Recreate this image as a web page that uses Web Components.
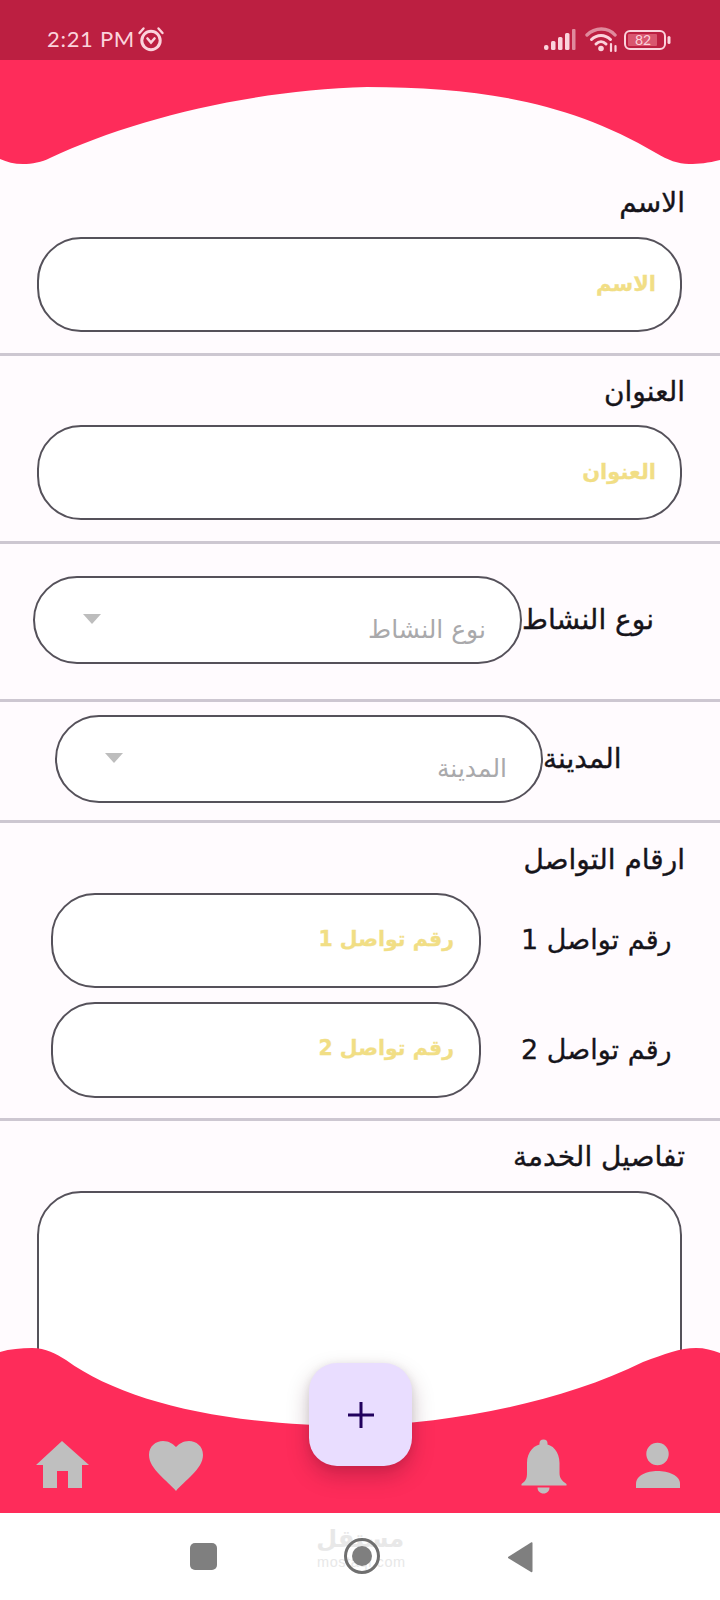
<!DOCTYPE html>
<html lang="ar">
<head>
<meta charset="utf-8">
<title>Form</title>
<style>
html,body{margin:0;padding:0;background:#fffbfe}
body{width:720px;height:1600px;overflow:hidden;font-family:"DejaVu Sans",sans-serif}
app-page{width:720px;height:1600px}
</style>
</head>
<body>
<app-page>
  <status-bar></status-bar>
  <header-curve></header-curve>
  <form-area>
    <form-section pt="24" pb="21">
      <form-label>الاسم</form-label>
      <text-field gap="19" hint="الاسم" h="95"></text-field>
    </form-section>
    <form-section pt="21" pb="21">
      <form-label>العنوان</form-label>
      <text-field gap="18" hint="العنوان" h="95"></text-field>
    </form-section>
    <form-section pt="32" pb="35">
      <select-row left="33" w="489" h="88" label="نوع النشاط" hint="نوع النشاط"></select-row>
    </form-section>
    <form-section pt="13" pb="17">
      <select-row left="55" w="488" h="88" label="المدينة" hint="المدينة"></select-row>
    </form-section>
    <form-section pt="22" pb="20">
      <form-label>ارقام التواصل</form-label>
      <contact-row gap="18" label="رقم تواصل 1" hint="رقم تواصل 1" h="95"></contact-row>
      <contact-row gap="14" label="رقم تواصل 2" hint="رقم تواصل 2" h="96"></contact-row>
    </form-section>
    <form-section pt="21" pb="0" noline>
      <form-label>تفاصيل الخدمة</form-label>
      <text-field gap="19" h="300" tall></text-field>
    </form-section>
  </form-area>
  <bottom-bar></bottom-bar>
  <nav-bar></nav-bar>
</app-page>
<script>
function el(name, css, html){
  customElements.define(name, class extends HTMLElement{
    constructor(){super();this.attachShadow({mode:"open"});}
    connectedCallback(){
      const a=k=>this.getAttribute(k);
      this.shadowRoot.innerHTML="<style>"+(typeof css==="function"?css(a,this):css)+"</style>"+(typeof html==="function"?html(a,this):html);
    }
  });
}
el("app-page",`:host{display:flex;flex-direction:column;position:relative}`,`<slot></slot>`);
el("form-area",`:host{display:block;flex:1;min-height:0;overflow:hidden}`,`<slot></slot>`);

el("status-bar",`:host{display:flex;align-items:center;height:60px;background:#bc1f41;color:#fbd3dc;box-sizing:border-box;padding:20px 49px 0 47px;flex:none}
.t{font:400 22px/1 "Lato",sans-serif;letter-spacing:.7px;margin-top:-3px;width:90px;white-space:nowrap}
svg{display:block}
.sp{flex:1}`,
`<span class="t">2:21 PM</span>
<svg width="28" height="26" viewBox="0 0 28 26" style="margin:-3px 0 0 0" fill="none" stroke="#fbd3dc" stroke-linecap="round">
<circle cx="14" cy="14.5" r="9.2" stroke-width="3"/>
<path d="M2.5 7 6.5 2.5M25.5 7 21.5 2.5" stroke-width="2.4"/>
<path d="M10.5 12.5 14 16.5 17.5 12.5" stroke-width="2.6"/>
</svg>
<span class="sp"></span>
<svg width="34" height="22" viewBox="0 0 34 22" style="margin:0 8px 0 0;">
<g fill="#fbd3dc"><rect x="1" y="16" width="4.5" height="5" rx="2"/><rect x="8" y="12" width="4.5" height="9" rx="1.5"/><rect x="15" y="8" width="4.5" height="13" rx="1.5"/><rect x="22" y="4" width="4.5" height="17" rx="1.5"/></g>
<rect x="29" y="0" width="3.5" height="21" rx="1" fill="#e08a9d"/>
</svg>
<svg width="34" height="26" viewBox="0 0 34 26" style="margin:0 5px 0 0;" fill="none" stroke-linecap="round">
<path d="M2 8C10 0 23 0 30 8" stroke="#e08a9d" stroke-width="3.4"/>
<path d="M6.5 12.5C12 7 20 7 25.5 12.5" stroke="#fbd3dc" stroke-width="3"/>
<path d="M11 17C14 14 18 14 21 17" stroke="#fbd3dc" stroke-width="3"/>
<circle cx="16" cy="21.5" r="2.8" fill="#fbd3dc"/>
<path d="M26 17v7M30.5 19v5" stroke="#fbd3dc" stroke-width="2.2"/>
</svg>
<svg width="47" height="20" viewBox="0 0 47 20">
<rect x="1" y="1" width="40" height="18" rx="5" fill="none" stroke="#fbd3dc" stroke-width="2"/>
<rect x="4" y="4" width="29" height="12" rx="1" fill="#d9566f"/>
<rect x="43.5" y="6" width="3" height="8" rx="1.5" fill="#fbd3dc"/>
<text x="19" y="15" text-anchor="middle" font-family="Lato, sans-serif" font-size="14" fill="#fbd3dc">82</text>
</svg>`);

el("header-curve",`:host{display:block;height:104px;flex:none}svg{display:block}`,
`<svg width="720" height="104" viewBox="0 0 720 104"><path fill="#fe2c5a" d="M0 0H720V100C708 103 699 104 689 104C678 104 668 100 656 93C570 42 480 27 367 27C250 30 130 60 50 98C42 102 32 104 23 104C14 104 7 102 0 99Z"/></svg>`);

el("form-section",(a,t)=>`:host{display:flex;flex-direction:column;box-sizing:border-box;padding:${a("pt")}px 0 ${a("pb")}px;${t.hasAttribute("noline")?"":"border-bottom:3px solid #cdc7d1;"}}`,`<slot></slot>`);

el("form-label",`:host{display:block;height:30px;line-height:30px;font-size:28px;color:#16141a;text-align:right;padding-right:35px;direction:rtl;-webkit-text-stroke:.35px #16141a;white-space:nowrap}`,`<slot></slot>`);

el("text-field",(a,t)=>`:host{display:flex;margin:${a("gap")}px 38px 0 37px;height:${a("h")}px;box-sizing:border-box;border:2px solid #55515a;border-radius:44px;background:#fff;align-items:center;justify-content:flex-end;padding-right:24px}
span{font-size:21px;font-weight:700;color:#f1de85;direction:rtl;margin-top:-2px;-webkit-text-stroke:.3px #f1de85}`,
(a)=>a("hint")?`<span>${a("hint")}</span>`:`<span></span>`);

el("select-row",(a)=>`:host{display:flex;padding-left:${a("left")}px;align-items:center}
.box{width:${a("w")}px;height:${a("h")}px;box-sizing:border-box;border:2px solid #55515a;border-radius:44px;background:#fff;display:flex;justify-content:space-between;align-items:flex-start;padding:36px 34px 0 48px;flex:none}
svg{display:block}
.h{font-size:25px;color:#a9a9ab;direction:rtl;line-height:30px;margin-top:1px}
.l{font-size:28px;color:#16141a;direction:rtl;white-space:nowrap;-webkit-text-stroke:.35px #16141a;margin-top:-1px}`,
(a)=>`<div class="box"><svg width="18" height="10" viewBox="0 0 18 10"><path d="M0 0H18L9 10Z" fill="#bdbdbd"/></svg><span class="h">${a("hint")}</span></div><span class="l">${a("label")}</span>`);

el("contact-row",(a)=>`:host{display:flex;align-items:center;padding-left:51px;margin-top:${a("gap")}px}
.box{width:430px;height:${a("h")}px;box-sizing:border-box;border:2px solid #55515a;border-radius:44px;background:#fff;display:flex;align-items:center;justify-content:flex-end;padding-right:25px;flex:none}
.h{font-size:20.5px;font-weight:700;color:#f1de85;direction:rtl;margin-top:-4px;white-space:nowrap;-webkit-text-stroke:.3px #f1de85}
.l{font-size:27px;color:#16141a;direction:rtl;white-space:nowrap;margin-left:40px;margin-top:-2px;-webkit-text-stroke:.3px #16141a}`,
(a)=>`<div class="box"><span class="h">${a("hint")}</span></div><span class="l">${a("label")}</span>`);

el("bottom-bar",`:host{display:flex;position:relative;height:165px;flex:none;margin-top:-165px;box-sizing:border-box;padding:91px 39px 0 35px;align-items:flex-start}
.bg{position:absolute;left:0;top:0;display:block}
.i{position:relative;display:block;flex:none}
.sp{flex:1}
.fab{position:absolute;left:309px;top:15px;width:103px;height:103px;border-radius:28px;background:#e9ddff;box-shadow:0 10px 22px rgba(60,10,30,.26),0 1px 8px rgba(0,0,0,.08);display:flex;align-items:center;justify-content:center}`,
`<svg class="bg" width="720" height="165" viewBox="0 0 720 165"><path fill="#fe2c5a" d="M0 4C10 1 21 0 32 0C46 0 56 6 66 12C125 55 230 78 360 78C450 75 560 55 643 14C665 6 680 0 696 0C705 0 712 2 720 5V165H0Z"/></svg>
<svg class="i" width="55" height="56" viewBox="0 0 55 56"><path fill="#bfbfbf" d="M27 2L54 26H47V49H33V32H22V49H8V26H1Z"/></svg>
<svg class="i" style="margin-left:58px" width="56" height="56" viewBox="0 0 56 56"><path fill="#bfbfbf" d="M28 52C20 42 1 30 1 16C1 7 8 2 15 2C21 2 25 5 28 8C31 5 35 2 41 2C48 2 55 7 55 16C55 30 36 42 28 52Z"/></svg>
<span class="sp"></span>
<svg class="i" width="46" height="56" viewBox="0 0 46 56"><g fill="#bfbfbf"><circle cx="22.5" cy="4.5" r="4"/><path d="M22.5 5C32 5 38.5 13 38.5 24V34C38.5 39 41 42 45.5 45V46.500H0.500V45C5 42 6 39 6 34V24C6 13 13 5 22.500 5Z"/><path d="M16.500 48.500H28.500C28.500 52 26 54.500 22.500 54.500C19 54.500 16.500 52 16.500 48.500Z"/></g></svg>
<svg class="i" style="margin-left:68px" width="46" height="56" viewBox="0 0 46 56"><g fill="#bfbfbf"><circle cx="22.500" cy="15" r="11.200"/><path d="M1 49V45C1 36 12 32 22.500 32C33 32 45 36 45 45V49Z"/></g></svg>
<div class="fab"><svg width="26" height="26" viewBox="0 0 26 26"><path d="M13 0V26M0 13H26" stroke="#21005d" stroke-width="3"/></svg></div>`);

el("nav-bar",`:host{display:flex;position:relative;height:87px;flex:none;background:#fff;align-items:flex-start;justify-content:center;gap:127px;box-sizing:border-box;padding:25px 0 0 3px}
svg{display:block;position:relative}
.wm{position:absolute;left:317px;top:12px;width:87px;text-align:center;color:#e8e8e8;line-height:1}
.a{display:block;font:700 24px/28px "DejaVu Sans",sans-serif;direction:rtl;height:30px;white-space:nowrap;text-align:center}
.b{display:block;font:400 14.500px/14px "Liberation Sans",sans-serif;letter-spacing:.6px;white-space:nowrap}`,
`<div class="wm"><span class="a">مستقل</span><span class="b">mostaql.com</span></div>
<svg width="27" height="36" viewBox="0 0 27 36"><rect x="0" y="5" width="27" height="27" rx="5" fill="#7f7f7f"/></svg>
<svg width="36" height="36" viewBox="0 0 36 36"><circle cx="18" cy="18" r="16.500" fill="none" stroke="#6f6f6f" stroke-width="3"/><circle cx="18" cy="18" r="10" fill="#7f7f7f"/></svg>
<svg width="26" height="36" viewBox="0 0 26 36"><path d="M1 19L24 4.500C25 4 25.500 4.500 25.500 5.500V33C25.500 34 25 34.500 24 34L1 20Z" fill="#7f7f7f"/></svg>`);
</script>
</body>
</html>
